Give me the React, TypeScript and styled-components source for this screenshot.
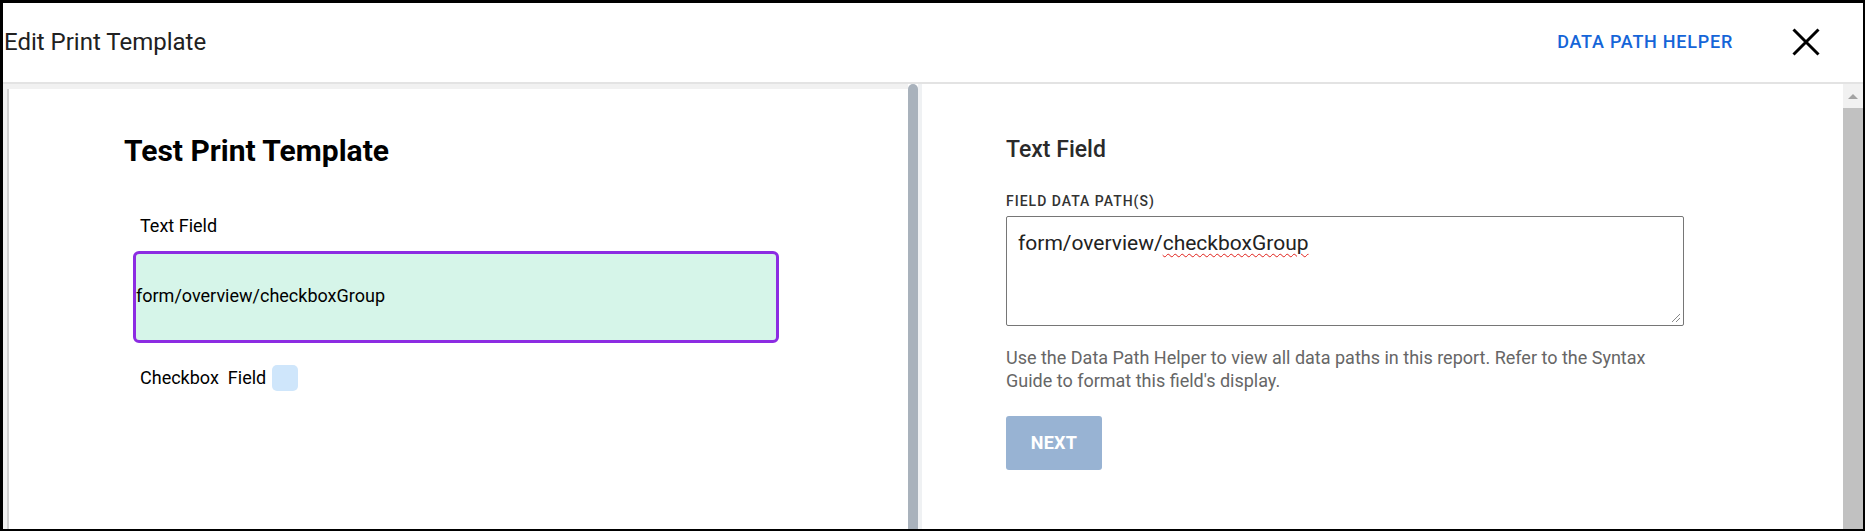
import React from "react";
import styled, { createGlobalStyle } from "styled-components";

const GlobalStyle = createGlobalStyle`
  html, body {
    margin: 0;
    padding: 0;
    background: #fff;
  }
  body {
    font-family: Roboto, "Liberation Sans", Arial, sans-serif;
  }
  * {
    box-sizing: border-box;
  }
`;

const Frame = styled.div`
  width: 1865px;
  height: 531px;
  display: flex;
  flex-direction: column;
  border-style: solid;
  border-color: #000;
  border-width: 3px 2px 2px 3px;
  overflow: hidden;
  background: #fff;
`;

const Header = styled.header`
  height: 81px;
  flex: 0 0 81px;
  display: flex;
  align-items: center;
  padding: 0 43px 2px 1px;
  border-bottom: 2px solid #e3e3e3;
`;

const Title = styled.h2`
  margin: 0;
  flex: 1;
  font-size: 24px;
  font-weight: 400;
  color: #212121;
`;

const LinkButton = styled.button`
  border: 0;
  background: none;
  padding: 0;
  margin-right: 59px;
  font-family: inherit;
  font-size: 18px;
  font-weight: 500;
  letter-spacing: 0.75px;
  color: #1565d8;
  cursor: pointer;
`;

const CloseButton = styled.button`
  border: 0;
  background: none;
  padding: 0;
  width: 28px;
  height: 28px;
  display: flex;
  cursor: pointer;
`;

const Body = styled.div`
  flex: 1;
  display: flex;
  min-height: 0;
`;

const PreviewPane = styled.section`
  flex: 0 0 905px;
  display: flex;
  padding: 5px 0 0 4px;
  background: #f1f1f1;
`;

const PreviewCard = styled.div`
  flex: 1;
  background: #fff;
  border-left: 2px solid #d2d2d2;
  padding: 44px 0 0 115px;
`;

const DocTitle = styled.h1`
  margin: 0;
  font-size: 30px;
  line-height: 36px;
  font-weight: 700;
  color: #000;
`;

const FieldList = styled.div`
  width: 646px;
  margin: 46px 0 0 9px;
  display: flex;
  flex-direction: column;
`;

const FieldLabel = styled.div`
  padding-left: 7px;
  font-size: 18px;
  line-height: 22px;
  color: #000;
`;

const FieldBox = styled.div<{ $selected?: boolean }>`
  margin-top: 14px;
  height: 92px;
  display: flex;
  align-items: center;
  padding-bottom: 4px;
  border: 3px solid ${(p) => (p.$selected ? "#8c2ce2" : "transparent")};
  border-radius: 6px;
  background: #d6f5e9;
  font-size: 18px;
  color: #000;
`;

const CheckRow = styled.div`
  margin-top: 22px;
  padding-left: 7px;
  display: flex;
  align-items: center;
  gap: 9px;
  font-size: 18px;
  line-height: 26px;
  color: #000;
`;

const CheckSquare = styled.span`
  width: 26px;
  height: 26px;
  margin-left: -3px;
  border-radius: 5px;
  background: #cfe6fb;
`;

const Splitter = styled.div`
  flex: 0 0 10px;
  background: #a9b2bc;
  border-radius: 5px 5px 0 0;
`;

const EditorPane = styled.section`
  flex: 1;
  border-left: 4px solid #eff1f3;
  padding: 52px 0 0 84px;
`;

const EditorTitle = styled.h3`
  margin: 0;
  font-size: 23px;
  line-height: 28px;
  font-weight: 500;
  color: #2a2a2a;
`;

const InputLabel = styled.label`
  display: block;
  margin-top: 29px;
  font-size: 14px;
  line-height: 16px;
  font-weight: 500;
  letter-spacing: 1px;
  color: #333;
`;

const TextBox = styled.div`
  position: relative;
  width: 678px;
  height: 110px;
  margin-top: 7px;
  padding: 14px 11px;
  border: 1px solid #767676;
  border-radius: 2px;
  font-size: 21px;
  line-height: 24px;
  color: #222;
`;

const Misspelled = styled.span`
  text-decoration: underline wavy #e0201a;
  text-decoration-thickness: 1px;
  text-underline-offset: 3px;
`;

const Grip = styled.svg`
  position: absolute;
  right: 2px;
  bottom: 2px;
`;

const Helper = styled.p`
  width: 678px;
  margin: 20px 0 0;
  font-size: 18px;
  line-height: 23px;
  color: #666;
`;

const PrimaryButton = styled.button`
  margin-top: 24px;
  width: 96px;
  height: 54px;
  padding-bottom: 2px;
  border: 0;
  border-radius: 3px;
  background: #98b3d3;
  color: #fff;
  font-family: inherit;
  font-size: 18px;
  font-weight: 700;
  letter-spacing: 0.3px;
`;

const ScrollTrack = styled.div`
  flex: 0 0 20px;
  display: flex;
  flex-direction: column;
  background: #f1f1f1;
`;

const ScrollArrow = styled.div`
  height: 24px;
  display: flex;
  align-items: center;
  justify-content: center;

  &::before {
    content: "";
    border-left: 5px solid transparent;
    border-right: 5px solid transparent;
    border-bottom: 5px solid #a3a3a3;
  }
`;

const ScrollThumb = styled.div`
  flex: 1;
  background: #c1c1c1;
`;

const App: React.FC = () => {
  return (
    <>
      <GlobalStyle />
      <Frame>
        <Header>
          <Title>Edit Print Template</Title>
          <LinkButton>DATA PATH HELPER</LinkButton>
          <CloseButton aria-label="Close">
            <svg width="28" height="28" viewBox="0 0 28 28">
              <path
                d="M1.5 1.5 L26.5 26.5 M26.5 1.5 L1.5 26.5"
                stroke="#000"
                strokeWidth="3"
                fill="none"
              />
            </svg>
          </CloseButton>
        </Header>
        <Body>
          <PreviewPane>
            <PreviewCard>
              <DocTitle>Test Print Template</DocTitle>
              <FieldList>
                <FieldLabel>Text Field</FieldLabel>
                <FieldBox $selected>form/overview/checkboxGroup</FieldBox>
                <CheckRow>
                  <span>Checkbox</span>
                  <span>Field</span>
                  <CheckSquare />
                </CheckRow>
              </FieldList>
            </PreviewCard>
          </PreviewPane>
          <Splitter />
          <EditorPane>
            <EditorTitle>Text Field</EditorTitle>
            <InputLabel>FIELD DATA PATH(S)</InputLabel>
            <TextBox>
              form/overview/<Misspelled>checkboxGroup</Misspelled>
              <Grip width="10" height="10" viewBox="0 0 10 10">
                <path d="M9 1 L1 9 M9 5 L5 9" stroke="#888" strokeWidth="1" />
              </Grip>
            </TextBox>
            <Helper>
              Use the Data Path Helper to view all data paths in this report. Refer to the Syntax Guide to
              format this field's display.
            </Helper>
            <PrimaryButton>NEXT</PrimaryButton>
          </EditorPane>
          <ScrollTrack>
            <ScrollArrow />
            <ScrollThumb />
          </ScrollTrack>
        </Body>
      </Frame>
    </>
  );
};

export default App;
